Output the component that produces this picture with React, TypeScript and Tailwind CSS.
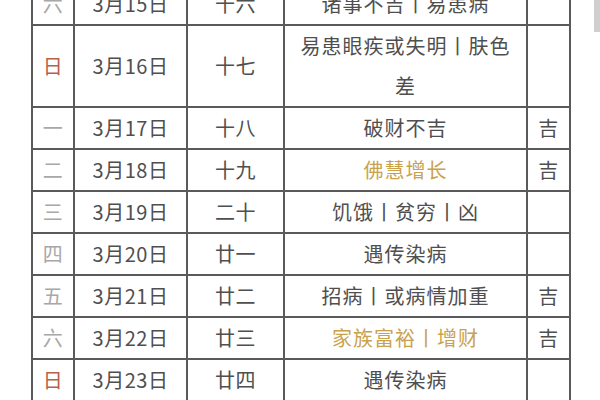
import React from 'react';

type Row = {
  week: string;
  red?: boolean;
  date: string;
  lunar: string;
  desc: string;
  gold?: boolean;
  ji?: boolean;
};

const rows: Row[] = [
  { week: '六', date: '3月15日', lunar: '十六', desc: '诸事不吉丨易患病' },
  { week: '日', red: true, date: '3月16日', lunar: '十七', desc: '易患眼疾或失明丨肤色差' },
  { week: '一', date: '3月17日', lunar: '十八', desc: '破财不吉', ji: true },
  { week: '二', date: '3月18日', lunar: '十九', desc: '佛慧增长', gold: true, ji: true },
  { week: '三', date: '3月19日', lunar: '二十', desc: '饥饿丨贫穷丨凶' },
  { week: '四', date: '3月20日', lunar: '廿一', desc: '遇传染病' },
  { week: '五', date: '3月21日', lunar: '廿二', desc: '招病丨或病情加重', ji: true },
  { week: '六', date: '3月22日', lunar: '廿三', desc: '家族富裕丨增财', gold: true, ji: true },
  { week: '日', red: true, date: '3月23日', lunar: '廿四', desc: '遇传染病' },
];

const cell = 'border-2 border-[#5a5a5a] text-center align-middle leading-[40px] p-0';

export default function App() {
  return (
    <div
      className="relative h-[400px] w-[600px] overflow-hidden bg-white"
      style={{ fontFamily: '"Noto Sans CJK SC", "Noto Sans", sans-serif' }}
    >
      <table className="ml-[31px] mt-[-18px] w-[538px] table-fixed border-collapse text-[20px] tracking-[0.5px] text-[#4f4f4f]">
        <colgroup>
          <col className="w-[42px]" />
          <col className="w-[113px]" />
          <col className="w-[97px]" />
          <col className="w-[243px]" />
          <col className="w-[43px]" />
        </colgroup>
        <tbody>
          {rows.map((r) => (
            <tr key={r.date}>
              <td className={`${cell} ${r.red ? 'text-[#b8604a]' : 'text-[#a8a8a8]'}`}>{r.week}</td>
              <td className={cell}>{r.date}</td>
              <td className={cell}>{r.lunar}</td>
              <td className={`${cell} px-3 tracking-[1px] ${r.gold ? 'text-[#c9a24e]' : ''}`}>{r.desc}</td>
              <td className={cell}>{r.ji ? '吉' : ''}</td>
            </tr>
          ))}
        </tbody>
      </table>
      <div className="absolute right-0 top-0 h-[32px] w-[6px] bg-[#cfcfcf]" />
    </div>
  );
}
